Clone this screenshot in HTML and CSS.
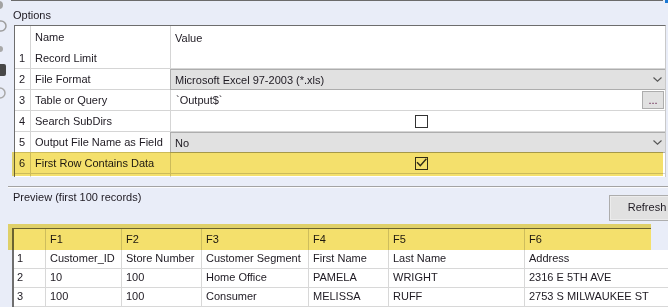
FILE: index.html
```html
<!DOCTYPE html>
<html>
<head>
<meta charset="utf-8">
<link rel="stylesheet" href="styles.css">
</head>
<body>
<div class="rail">
  <svg width="11" height="110" viewBox="0 0 11 110">
    <circle cx="-1" cy="5" r="4" fill="#a3a3a3"/>
    <circle cx="1" cy="26" r="5" fill="none" stroke="#9d9d9d" stroke-width="1.5"/>
    <circle cx="0" cy="49" r="3" fill="#a8a8a8"/>
    <rect x="-4" y="64" width="10" height="12" rx="2" fill="#474747"/>
    <circle cx="0" cy="93" r="5" fill="none" stroke="#a8a8a8" stroke-width="1.5"/>
  </svg>
</div>
<div class="main">
  <div class="topbar"><div class="topline"></div><div class="corner"></div></div>
  <div class="title">Options</div>
  <div class="ogrid">
    <div class="orow ohead"><div class="c num"></div><div class="c name">Name</div><div class="c val">Value</div></div>
    <div class="orow"><div class="c num">1</div><div class="c name">Record Limit</div><div class="c val"></div></div>
    <div class="orow"><div class="c num">2</div><div class="c name">File Format</div><div class="c val"><div class="dd"><span>Microsoft Excel 97-2003 (*.xls)</span><svg class="chev" width="9" height="5" viewBox="0 0 9 5"><path d="M0.5 0.5 L4.5 4.2 L8.5 0.5" fill="none" stroke="#555" stroke-width="1.1"/></svg></div></div></div>
    <div class="orow"><div class="c num">3</div><div class="c name">Table or Query</div><div class="c val txt"><span class="grow">`Output$`</span><div class="ell">...</div></div></div>
    <div class="orow"><div class="c num">4</div><div class="c name">Search SubDirs</div><div class="c val center"><div class="cb"></div></div></div>
    <div class="orow"><div class="c num">5</div><div class="c name">Output File Name as Field</div><div class="c val"><div class="dd"><span>No</span><svg class="chev" width="9" height="5" viewBox="0 0 9 5"><path d="M0.5 0.5 L4.5 4.2 L8.5 0.5" fill="none" stroke="#555" stroke-width="1.1"/></svg></div></div></div>
    <div class="orow"><div class="c num">6</div><div class="c name">First Row Contains Data</div><div class="c val center"><div class="cb"><svg width="11" height="11" viewBox="0 0 11 11"><path d="M1 4.2 L4.3 7.6 L10.4 0.8" fill="none" stroke="#333" stroke-width="1.4"/></svg></div></div></div>
    <div class="orow"><div class="c num"></div><div class="c name"></div><div class="c val"></div></div>
  </div>
  <div class="splitter"></div>
  <div class="phead">
    <div class="plabel">Preview (first 100 records)</div>
    <div class="refresh">Refresh</div>
  </div>
  <div class="pgrid">
    <div class="prow phrow"><div class="p"></div><div class="p">F1</div><div class="p">F2</div><div class="p">F3</div><div class="p">F4</div><div class="p">F5</div><div class="p">F6</div></div>
    <div class="prow"><div class="p rh">1</div><div class="p">Customer_ID</div><div class="p">Store Number</div><div class="p">Customer Segment</div><div class="p">First Name</div><div class="p">Last Name</div><div class="p">Address</div></div>
    <div class="prow"><div class="p rh">2</div><div class="p">10</div><div class="p">100</div><div class="p">Home Office</div><div class="p">PAMELA</div><div class="p">WRIGHT</div><div class="p">2316 E 5TH AVE</div></div>
    <div class="prow"><div class="p rh">3</div><div class="p">100</div><div class="p">100</div><div class="p">Consumer</div><div class="p">MELISSA</div><div class="p">RUFF</div><div class="p">2753 S MILWAUKEE ST</div></div>
  </div>
  <div class="hl hl-opt"></div>
  <div class="hl hl-prev"></div>
</div>
</body>
</html>
```
FILE: styles.css
```css
* { box-sizing: border-box; }
html, body { margin: 0; padding: 0; }
body {
  width: 668px;
  height: 307px;
  overflow: hidden;
  background: #e9edf8;
  font-family: "Liberation Sans", Arial, sans-serif;
  font-size: 11px;
  line-height: 13px;
  color: #1e1a22;
  display: flex;
}
.rail { width: 11px; flex: none; }
.rail svg { display: block; }
.main { flex: 1; min-width: 0; position: relative; }

.topbar { display: flex; height: 1px; gap: 2px; }
.topline { flex: 1; height: 1px; background: #6b6b6b; }
.corner { width: 3px; height: 3px; background: #1a78d4; flex: none; }

.title { height: 24px; padding: 8px 0 0 2px; }

.ogrid {
  margin: 0 2px 9px 3px;
  height: 152px;
  overflow: hidden;
  background: #fff;
  border-top: 1px solid #6d6d6d;
  border-left: 1px solid #6d6d6d;
  border-right: 1px solid #c9c9c9;
}
.orow {
  display: grid;
  grid-template-columns: 16px 140px 1fr;
  height: 21px;
  border-bottom: 1px solid #d5d5d5;
}
.orow.ohead { height: 22px; border-bottom: none; padding-top: 2px; }
.c {
  display: flex;
  align-items: center;
  padding-left: 4px;
  white-space: nowrap;
  overflow: visible;
  min-width: 0;
}
.c.num, .c.name { border-right: 1px solid #d5d5d5; }
.ohead .c.num, .ohead .c.name { margin-top: -2px; }
.c.name { overflow: hidden; }
.c.val { padding-left: 4px; }
.c.val.center { justify-content: center; padding-left: 6px; }

.dd {
  position: relative;
  display: flex;
  align-items: center;
  justify-content: space-between;
  margin: 0 -1px -1px -5px;
  height: 21px;
  flex: 1;
  align-self: flex-start;
  background: #e1e1e1;
  border: 1px solid #adadad;
  padding: 1px 3px 0 4px;
}
.chev { display: block; margin-top: -1px; }

.txt .grow { flex: 1; padding-left: 1px; }
.ell {
  width: 22px;
  height: 18px;
  margin: 0 1px 0 0;
  align-self: flex-start;
  margin-top: 1px;
  background: #e1e1e1;
  border: 1px solid #adadad;
  color: #5a1040;
  text-align: center;
  padding-top: 2px;
  line-height: 13px;
}

.cb {
  width: 13px;
  height: 13px;
  background: #fff;
  border: 1px solid #333;
  display: flex;
  align-items: center;
  justify-content: center;
}
.cb svg { display: block; }

.splitter {
  margin-left: -3px;
  height: 2px;
  border-top: 1px solid #a3a3a3;
  border-bottom: 1px solid #fbfbfc;
}

.phead {
  height: 40px;
  display: flex;
  justify-content: space-between;
  align-items: flex-start;
}
.plabel { padding: 3px 0 0 2px; }
.refresh {
  width: 76px;
  height: 26px;
  margin: 7px -17px 0 0;
  background: #e1e1e1;
  border: 1px solid #adadad;
  box-shadow: inset 0 0 0 1px #ececec;
  display: flex;
  align-items: center;
  justify-content: center;
  padding-bottom: 2px;
}

.pgrid {
  margin-left: 1px;
  border-left: 2px solid #6f6f6f;
}
.prow {
  display: grid;
  grid-template-columns: 32px 76px 80px 107px 80px 136px 1fr;
  height: 19px;
  background: #fff;
  border-bottom: 1px solid #d8d8d8;
}
.prow.phrow {
  width: 637px;
  height: 22px;
  border-top: 1px solid #6e6e6e;
  border-bottom: none;
}
.p {
  border-right: 1px solid #d8d8d8;
  padding-left: 4px;
  display: flex;
  align-items: center;
  white-space: nowrap;
  overflow: hidden;
}
.prow:not(.phrow) .p { padding-bottom: 1px; }
.p.rh { padding-left: 3px; }
.p:last-child { border-right: none; }

.hl {
  position: absolute;
  background: #f4e06c;
  mix-blend-mode: multiply;
  pointer-events: none;
}
.hl-opt { left: 1px; top: 152px; width: 651px; height: 24px; }
.hl-prev { left: -3px; top: 224px; width: 643px; height: 26px; }
```
